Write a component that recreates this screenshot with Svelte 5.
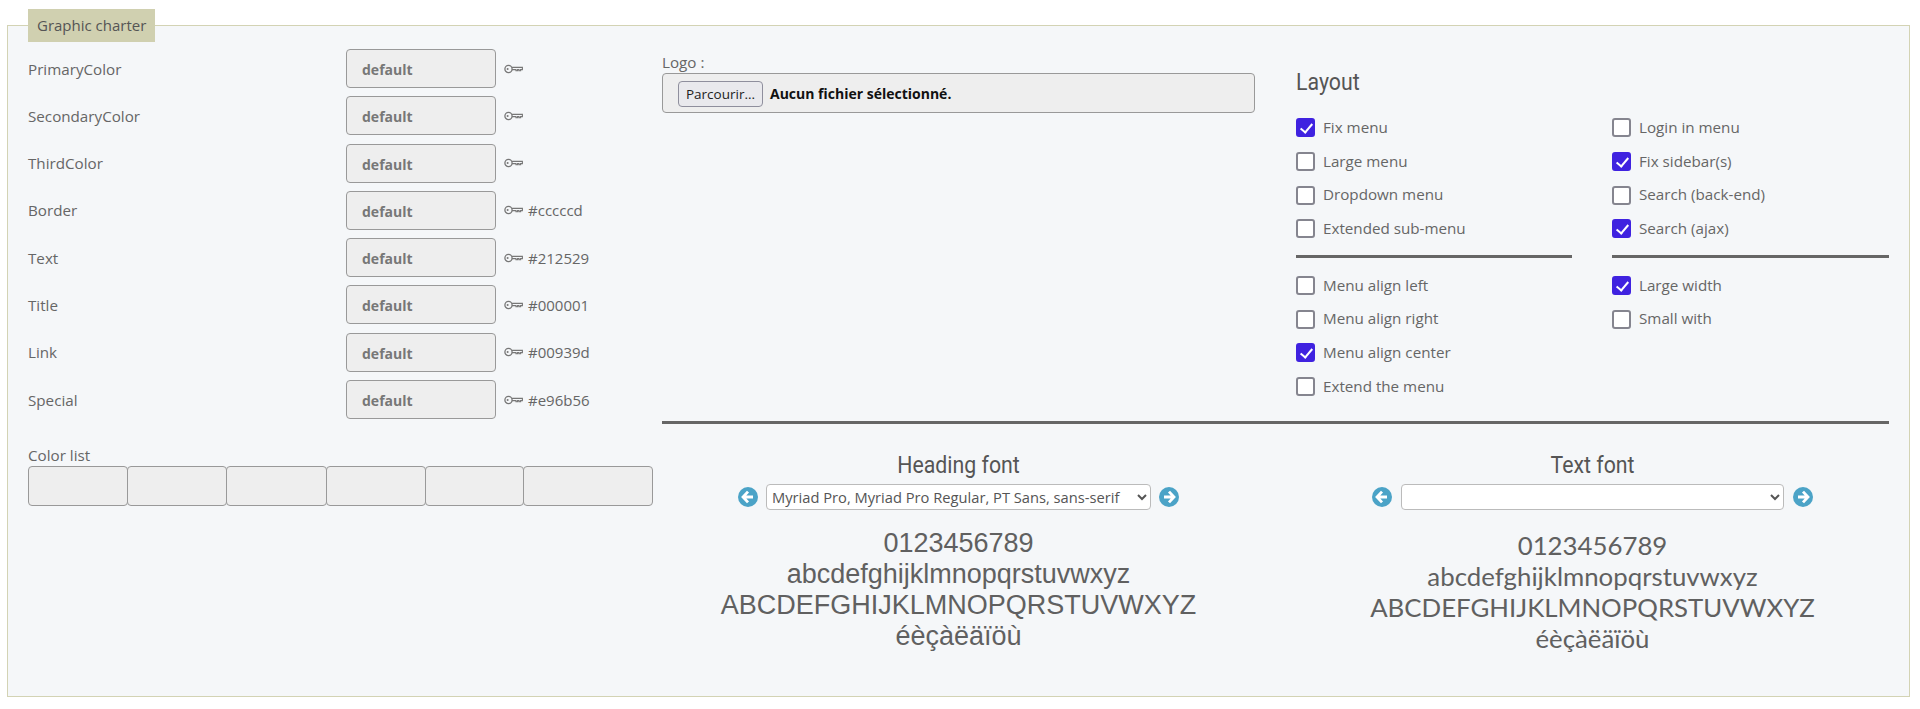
<script>
  const colors = [
    { name: "PrimaryColor", hex: "" },
    { name: "SecondaryColor", hex: "" },
    { name: "ThirdColor", hex: "" },
    { name: "Border", hex: "#cccccd" },
    { name: "Text", hex: "#212529" },
    { name: "Title", hex: "#000001" },
    { name: "Link", hex: "#00939d" },
    { name: "Special", hex: "#e96b56" },
  ];
  const swatches = [100, 100, 101, 100, 99, 130];

  const groups = [
    [
      ["Fix menu", true],
      ["Large menu", false],
      ["Dropdown menu", false],
      ["Extended sub-menu", false],
    ],
    [
      ["Login in menu", false],
      ["Fix sidebar(s)", true],
      ["Search (back-end)", false],
      ["Search (ajax)", true],
    ],
    [
      ["Menu align left", false],
      ["Menu align right", false],
      ["Menu align center", true],
      ["Extend the menu", false],
    ],
    [
      ["Large width", true],
      ["Small with", false],
    ],
  ];

  const headingFont = "Myriad Pro, Myriad Pro Regular, PT Sans, sans-serif";
</script>

{#snippet key()}
  <svg class="key" viewBox="0 0 19 10" width="19" height="10" aria-hidden="true">
    <circle cx="4.5" cy="5" r="3.6" fill="none" stroke="#777" stroke-width="1.3" />
    <circle cx="3.6" cy="5" r="1" fill="#777" />
    <path d="M8 3.4H18.4V5.6H16.6V6.8H15V5.6H13.6V6.8H12V5.6H8" fill="none" stroke="#777" stroke-width="1.1" />
  </svg>
{/snippet}

{#snippet arrow(dir)}
  <svg class="arrow" viewBox="0 0 20 20" width="20" height="20" aria-hidden="true">
    <circle cx="10" cy="10" r="10" fill="#4ba3c7" />
    {#if dir === "left"}
      <path d="M10 4.6 5 10l5 5.4M5.6 10H15" fill="none" stroke="#fff" stroke-width="2.8" />
    {:else}
      <path d="M10 4.6 15 10l-5 5.4M14.4 10H5" fill="none" stroke="#fff" stroke-width="2.8" />
    {/if}
  </svg>
{/snippet}

{#snippet checks(list)}
  <div class="checks">
    {#each list as [text, on]}
      <label class="check">
        <input type="checkbox" checked={on} />
        <span>{text}</span>
      </label>
    {/each}
  </div>
{/snippet}

<fieldset class="charter">
  <legend>Graphic charter</legend>

  <div class="cols">
    <div class="left">
      {#each colors as c}
        <div class="color-row">
          <span class="name">{c.name}</span>
          <button class="pick">default</button>
          <span class="value">{@render key()}{c.hex}</span>
        </div>
      {/each}

      <div class="list-label">Color list</div>
      <div class="swatches">
        {#each swatches as w}
          <div class="swatch" style="width: {w}px"></div>
        {/each}
      </div>
    </div>

    <div class="right">
      <div class="top">
        <div class="logo">
          <div class="logo-label">Logo :</div>
          <div class="file">
            <button class="browse">Parcourir...</button>
            <span class="nofile">Aucun fichier sélectionné.</span>
          </div>
        </div>

        <div class="layout">
          <h3>Layout</h3>
          <div class="layout-grid">
            {@render checks(groups[0])}
            {@render checks(groups[1])}
            <hr />
            <hr />
            {@render checks(groups[2])}
            {@render checks(groups[3])}
          </div>
        </div>
      </div>

      <hr class="wide" />

      <div class="fonts">
        <div class="font">
          <h4>Heading font</h4>
          <div class="chooser">
            {@render arrow("left")}
            <select class="sel-heading">
              <option>{headingFont}</option>
            </select>
            {@render arrow("right")}
          </div>
          <div class="sample sample-heading">
            <div>0123456789</div>
            <div>abcdefghijklmnopqrstuvwxyz</div>
            <div>ABCDEFGHIJKLMNOPQRSTUVWXYZ</div>
            <div>éèçàëäïöù</div>
          </div>
        </div>

        <div class="font">
          <h4>Text font</h4>
          <div class="chooser wide-gap">
            {@render arrow("left")}
            <select class="sel-text">
              <option></option>
            </select>
            {@render arrow("right")}
          </div>
          <div class="sample sample-text">
            <div>0123456789</div>
            <div>abcdefghijklmnopqrstuvwxyz</div>
            <div>ABCDEFGHIJKLMNOPQRSTUVWXYZ</div>
            <div>éèçàëäïöù</div>
          </div>
        </div>
      </div>
    </div>
  </div>
</fieldset>

<style>
  :global(body) {
    margin: 0;
    background: #fff;
    font-family: "Open Sans", "Liberation Sans", sans-serif;
    font-size: 15.2px;
    color: #666;
  }

  .charter {
    box-sizing: border-box;
    height: 688px;
    margin: 9px 10px 0 7px;
    padding: 7px 21px 0 20px;
    min-width: 0;
    border: 1px solid #d3d3b4;
    background: #f5f7f9;
  }

  legend {
    box-sizing: border-box;
    height: 33px;
    margin-left: 0;
    padding: 0 9px;
    line-height: 33px;
    background: #d0d0b0;
    color: #555;
    font-size: 15px;
  }

  .cols {
    display: grid;
    grid-template-columns: 625px 1fr;
    column-gap: 9px;
  }

  .color-row {
    display: grid;
    grid-template-columns: 318px 150px 1fr;
    align-items: center;
    height: 39px;
    margin-bottom: 8.3px;
  }

  .pick {
    box-sizing: border-box;
    width: 150px;
    height: 39px;
    padding: 2px 0 0 15px;
    text-align: left;
    border: 1px solid #999;
    border-radius: 4px;
    background: #eee;
    color: #777;
    font: bold 14px "Open Sans", sans-serif;
  }

  .value {
    display: flex;
    align-items: center;
    gap: 5px;
    margin-left: 8px;
    font-size: 15px;
  }

  .key {
    flex: none;
  }

  .list-label {
    margin-top: 25.5px;
    line-height: 20px;
  }

  .swatches {
    display: flex;
    height: 40px;
    margin-top: 1px;
  }

  .swatch {
    box-sizing: border-box;
    height: 40px;
    margin-left: -1px;
    border: 1px solid #999;
    border-radius: 4px;
    background: #eee;
  }

  .swatch:first-child {
    margin-left: 0;
  }

  .top,
  .fonts {
    display: grid;
    grid-template-columns: 593px 593px;
    column-gap: 41px;
  }

  .logo {
    padding-top: 3px;
  }

  .logo-label {
    line-height: 21px;
  }

  .file {
    box-sizing: border-box;
    display: flex;
    align-items: center;
    gap: 7px;
    height: 40px;
    padding: 1px 15px 0;
    border: 1px solid #999;
    border-radius: 4px;
    background: #eee;
  }

  .browse {
    box-sizing: border-box;
    width: 85px;
    height: 26px;
    padding: 0;
    border: 1px solid #8f8f9d;
    border-radius: 4px;
    background: #e9e9ed;
    color: #222;
    font: 13.5px "Open Sans", sans-serif;
  }

  .nofile {
    color: #111;
    font-weight: bold;
    font-size: 14px;
  }

  h3,
  h4 {
    margin: 0;
    font-family: "Roboto", sans-serif;
    font-weight: 400;
    color: #555;
    font-size: 24px;
    line-height: 30px;
    transform: scaleX(0.887);
  }

  h3 {
    margin-top: 18px;
    margin-bottom: 14px;
    transform-origin: left;
  }

  h4 {
    padding-top: 1px;
    text-align: center;
  }

  .layout-grid {
    display: grid;
    grid-template-columns: 276px 277px;
    column-gap: 40px;
  }

  .layout-grid hr {
    width: 100%;
    margin: 9px 0 11px;
  }

  .check {
    display: flex;
    align-items: center;
    gap: 8px;
    height: 33.7px;
  }

  .check span {
    margin-top: -2px;
  }

  .check input {
    appearance: none;
    box-sizing: border-box;
    position: relative;
    flex: none;
    width: 19px;
    height: 19px;
    margin: 0;
    border: 2px solid #85858f;
    border-radius: 3px;
    background: #fff;
  }

  .check input:checked {
    border-color: #3f22e0;
    background: #3f22e0;
  }

  .check input:checked::after {
    content: "";
    position: absolute;
    left: 4.5px;
    top: 0.5px;
    width: 5px;
    height: 10px;
    border: solid #fff;
    border-width: 0 2px 2px 0;
    transform: rotate(40deg);
  }

  hr {
    height: 3px;
    border: 0;
    background: #666;
  }

  .wide {
    margin: 17px 0 25px;
  }

  .chooser {
    display: flex;
    justify-content: center;
    align-items: center;
    gap: 8px;
    margin-top: 4px;
  }

  .wide-gap {
    gap: 9px;
  }

  select {
    box-sizing: border-box;
    height: 26px;
    padding: 0 0 0 1px;
    border: 1px solid #bbb;
    border-radius: 4px;
    background-color: #fff;
    color: #555;
    font: 14.7px "Open Sans", sans-serif;
  }

  .sel-heading {
    width: 385px;
  }

  .sel-text {
    width: 383px;
  }

  .sample {
    text-align: center;
    white-space: nowrap;
    line-height: 31px;
    color: #606060;
  }

  .sample-heading {
    margin-top: 18px;
    font-family: "Liberation Sans", sans-serif;
    font-size: 27px;
  }

  .sample-text {
    margin-top: 20px;
    font-family: "Lato", sans-serif;
    font-size: 25.8px;
  }
</style>
